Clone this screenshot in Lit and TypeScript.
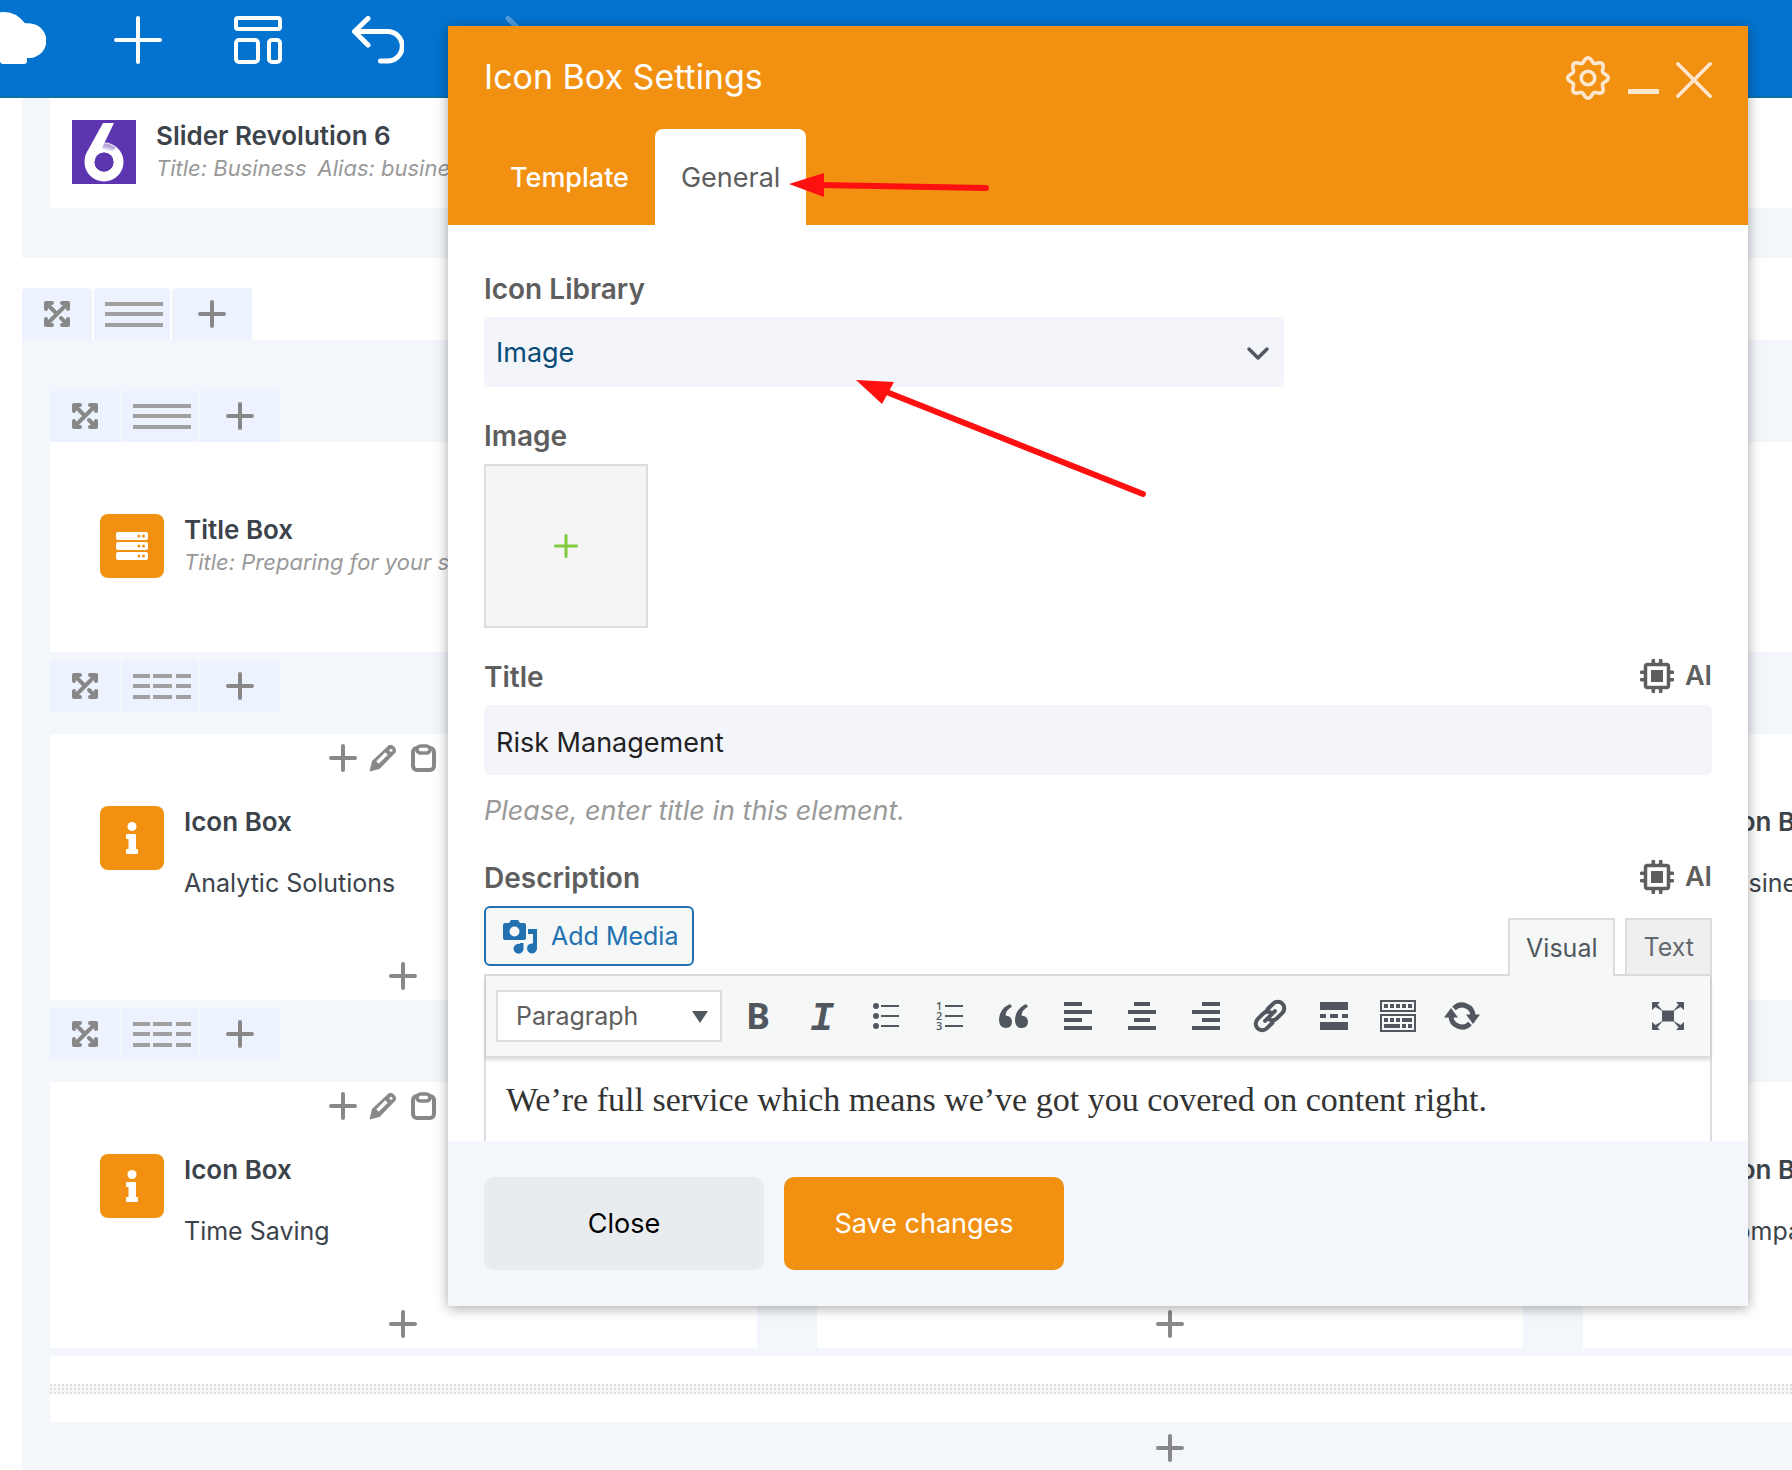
import { LitElement, html, css, svg, nothing } from "lit";
import type { TemplateResult } from "lit";
import { customElement, property } from "lit/decorators.js";

/* ---------- icons ---------- */

const gearPath = (() => {
  const points: string[] = [];
  for (let i = 0; i < 160; i++) {
    const a = (i / 160) * Math.PI * 2;
    const r = 18 + 2.2 * Math.cos(8 * a);
    points.push(`${(22 + r * Math.cos(a)).toFixed(2)} ${(22 + r * Math.sin(a)).toFixed(2)}`);
  }
  return `M${points.join("L")}Z`;
})();

const frame = (w: number, h: number, body: unknown) =>
  html`<svg width=${w} height=${h} viewBox="0 0 ${w} ${h}" fill="none" aria-hidden="true">${body}</svg>`;

const plusIcon = (size: number, stroke: number) => {
  const c = size / 2;
  const e = stroke / 2;
  return frame(size, size, svg`<path d="M${c} ${e}V${size - e}M${e} ${c}H${size - e}" stroke="currentColor"
    stroke-width=${stroke} stroke-linecap="round"/>`);
};

const cloudIcon = () => frame(46, 64, svg`<path fill="currentColor"
  d="M0 12.3Q15 10 25 23.300Q28 23 31 23.500A17.200 17.200 0 0 1 27 58V61Q27 64 24 64H3Q1 64 0 62Z"/>`);

const layoutIcon = () => frame(48, 48, svg`<g stroke="currentColor" stroke-width="4">
  <rect x="2" y="2" width="44" height="11" rx="2"/><rect x="2" y="24" width="22" height="22" rx="3"/>
  <rect x="35" y="24" width="11" height="22" rx="3"/></g>`);

const undoIcon = () => frame(52, 48, svg`<path d="M16 2.500L2.500 15.500L16 29M3 15.500H35.500A14.500 14.500 0 0 1 35.500 45H28.500"
  stroke="currentColor" stroke-width="5" stroke-linecap="round" stroke-linejoin="round"/>`);

const redoIcon = () => frame(52, 48, svg`<path d="M36 2.500L49.500 15.500L36 29M49 15.500H16.500A14.500 14.500 0 0 0 16.500 45H23.500"
  stroke="currentColor" stroke-width="5" stroke-linecap="round" stroke-linejoin="round"/>`);

const moveIcon = () => frame(26, 26, svg`<g stroke="currentColor" stroke-width="4" stroke-linecap="round" stroke-linejoin="round">
  <path d="M2 8V2H8M18 2H24V8M24 18V24H18M8 24H2V18"/><path d="M3 3L11 11M23 3L3 23M17 17L23 23"/></g>`);

const columnsIcon = (split: boolean) => frame(58, 26, svg`<g fill="#a0a0a0">${[0, 10, 21].map((y) =>
  split
    ? svg`<rect y=${y} width="17" height="4"/><rect x="20" y=${y} width="19" height="4"/><rect x="43" y=${y} width="15" height="4"/>`
    : svg`<rect y=${y} width="58" height="4"/>`)}</g>`);

const pencilIcon = () => frame(28, 28, svg`<path d="M0.500 27.500L3 17L19.500 1.500Q22-.5 25 2.500T26.500 8.500L10.500 25Z" fill="currentColor"/>
  <path d="M8.500 18.500L17.500 9.500" stroke="#fff" stroke-width="3.500"/><circle cx="22" cy="6.200" r="1.500" fill="#fff"/>`);

const clipboardIcon = () => frame(26, 28, svg`<rect x="3" y="4" width="21" height="22" rx="4" stroke="currentColor" stroke-width="4"/>
  <rect x="7" y="2" width="13" height="7" rx="3.500" stroke="currentColor" stroke-width="3.500" fill="#fff"/>`);

const gearIcon = () => frame(44, 44, svg`<path d=${gearPath} stroke="currentColor" stroke-width="3.600" stroke-linejoin="round"/>
  <circle cx="22" cy="22" r="6.800" stroke="currentColor" stroke-width="3.600"/>`);

const minimizeIcon = () => frame(32, 44, svg`<rect x="1" y="33" width="31" height="5" fill="currentColor"/>`);

const closeIcon = () => frame(36, 44, svg`<path d="M1.800 7.800L34.200 40.200M34.200 7.800L1.800 40.200" stroke="currentColor"
  stroke-width="3.500" stroke-linecap="round"/>`);

const chevronIcon = () => frame(24, 16, svg`<path d="M3 3L12 12L21 3" stroke="#50575e" stroke-width="3.500"
  stroke-linecap="round" stroke-linejoin="round"/>`);

const caretIcon = () => frame(16, 12, svg`<path d="M0 0H16L8 12Z" fill="#50575e"/>`);

const chipIcon = () => frame(34, 34, svg`<rect x="5.500" y="5.500" width="23" height="23" rx="2" stroke="currentColor" stroke-width="3.500"/>
  <rect x="11" y="11" width="12" height="12" fill="currentColor"/>
  <path d="M13.300 1.500V5M20.700 1.500V5M13.300 29V32.500M20.700 29V32.500M1.500 13.300H5M1.500 20.700H5M29 13.300H32.500M29 20.700H32.500"
    stroke="currentColor" stroke-width="3.600" stroke-linecap="round"/>`);

const mediaIcon = () => frame(36, 36, svg`<path fill="currentColor" fill-rule="evenodd"
  d="M2 5H6L8 2H15L17 5H21Q23 5 23 7V20Q23 22 21 22H2Q0 22 0 20V7Q0 5 2 5ZM11.500 8.500A5 5 0 1 0 11.500 18.500A5 5 0 1 0 11.500 8.500Z"/>
  <path fill="currentColor" d="M25 11H34V30A5 5 0 1 1 30 25.500V16H25Z"/>
  <path fill="currentColor" d="M17 25H20.500V30.500A5 5 0 1 1 17 26Z"/>`);

const logoSix = () => frame(64, 64, svg`<rect width="64" height="64" fill="#5e35b1"/>
  <defs><linearGradient id="shade" x1="0" y1="1" x2="1" y2="0"><stop offset=".3" stop-color="#fff"/>
  <stop offset="1" stop-color="#b9a6dd"/></linearGradient></defs>
  <circle cx="32" cy="42" r="14.500" stroke="#fff" stroke-width="10"/>
  <path d="M28 28.500A14.500 14.500 0 0 1 41 31" stroke="url(#shade)" stroke-width="9"/>
  <path d="M31 3H42L29 30L20 47L13 38Q13.500 35 15 32Z" fill="#fff"/>
  <circle cx="32" cy="42" r="9.500" fill="#5e35b1"/>`);

const serverIcon = () => frame(32, 28, svg`${[0, 10, 20].map((y) => svg`<rect y=${y} width="32" height="8" rx="2" fill="#fff"/>
  <circle cx="23" cy=${y + 4} r="1.500" fill="#f29111"/><circle cx="27.500" cy=${y + 4} r="1.500" fill="#f29111"/>`)}`);

const infoIcon = () => frame(12, 32, svg`<circle cx="6" cy="4.500" r="4.500" fill="#fff"/>
  <path fill="#fff" d="M1 12H9Q10 12 10 13V27H11Q12 27 12 28V31Q12 32 11 32H1Q0 32 0 31V28Q0 27 1 27H2.500V17H1Q0 17 0 16V13Q0 12 1 12Z"/>`);

const bulletListIcon = () => frame(40, 40, svg`<g fill="currentColor">${[10, 20, 30].map((y) =>
  svg`<circle cx="10" cy=${y} r="3"/><rect x="15" y=${y - 1} width="18" height="2"/>`)}</g>`);

const numberListIcon = () => frame(40, 40, svg`<g fill="currentColor">${[10, 20, 30].map((y, i) =>
  svg`<text x="6" y=${y + 4} font-family="Open Sans, sans-serif" font-weight="600" font-size="11">${i + 1}</text>
  <rect x="15" y=${y - 1} width="18" height="2"/>`)}</g>`);

const quoteIcon = () => frame(40, 40, svg`<g fill="currentColor">
  <path d="M16 8Q5 13 5 24.500Q5.500 32 12 32Q18 31.500 18 25.500Q17.500 20 11.500 19.500Q12 14 18 10.500Z"/>
  <path d="M32 8Q21 13 21 24.500Q21.500 32 28 32Q34 31.500 34 25.500Q33.500 20 27.500 19.500Q28 14 34 10.500Z"/></g>`);

const alignIcon = (rows: number[][]) => frame(40, 40, svg`<g fill="currentColor">${rows.map(([x, w], i) =>
  svg`<rect x=${x} y=${6 + i * 8} width=${w} height="4"/>`)}</g>`);

const linkIcon = () => frame(40, 40, svg`<g transform="rotate(-45 20 20)" stroke="currentColor" stroke-width="4" stroke-linecap="round">
  <path d="M17 26.500H9A6.500 6.500 0 0 1 9 13.500H17A6.500 6.500 0 0 1 23 18"/>
  <path d="M23 13.500H31A6.500 6.500 0 0 1 31 26.500H23A6.500 6.500 0 0 1 17 22"/><path d="M13 20H27"/></g>`);

const moreIcon = () => frame(40, 40, svg`<g fill="currentColor"><rect x="6" y="6" width="28" height="8"/><rect x="6" y="26" width="28" height="8"/>
  <rect x="6" y="18" width="6" height="4"/><rect x="16" y="18" width="8" height="4"/><rect x="28" y="18" width="6" height="4"/></g>`);

const keyboardIcon = () => frame(40, 40, svg`<g stroke="currentColor" stroke-width="2"><rect x="3" y="5" width="34" height="10"/>
  <rect x="3" y="19" width="34" height="16"/></g><g fill="currentColor">
  ${[6, 12, 18, 24, 30].map((x) => svg`<rect x=${x} y="8" width="4" height="4"/>`)}
  ${[6, 12, 18].map((x) => svg`<rect x=${x} y="22" width="4" height="4"/>`)}
  <rect x="24" y="22" width="10" height="4"/><rect x="6" y="28" width="16" height="4"/>
  <rect x="24" y="28" width="4" height="4"/><rect x="30" y="28" width="4" height="4"/></g>`);

const refreshIcon = () => frame(40, 40, svg`<g stroke="currentColor" stroke-width="5"><path d="M12 12.500A11 11 0 0 1 31 20"/>
  <path d="M28 27.500A11 11 0 0 1 9 20"/></g><g fill="currentColor"><path d="M2 21.500L9 12L16 21.500Z"/><path d="M24 18.500H38L31 28Z"/></g>`);

const fullscreenIcon = () => frame(40, 40, svg`<g fill="currentColor"><rect x="14" y="14.500" width="12" height="11"/>
  ${[[1, 1], [-1, 1], [1, -1], [-1, -1]].map(([x, y]) => svg`<path transform="translate(20 20) scale(${x} ${y})"
    d="M-16-14H-8L-10.500-11.500L-5-4.500L-12.500-9L-16-6Z"/>`)}</g>`);

/* ---------- canvas pieces ---------- */

@customElement("row-controls")
class RowControls extends LitElement {
  @property({ type: Boolean }) split = false;

  static styles = css`
    :host { display: flex; gap: 2px; height: 52px; color: #888; }
    * { box-sizing: border-box; }
    button {
      display: flex; align-items: center; justify-content: center; height: 52px; padding: 0;
      border: 0; border-radius: 4px 4px 0 0; background: #ecf3fe; color: inherit;
    }
    .move { width: 70px; }
    .columns { width: 76px; padding: 2px 0 0 4px; }
    .add { width: 80px; }
  `;

  render() {
    return html`
      <button class="move" aria-label="Move row">${moveIcon()}</button>
      <button class="columns" aria-label="Row layout">${columnsIcon(this.split)}</button>
      <button class="add" aria-label="Add column">${plusIcon(28, 4)}</button>
    `;
  }
}

@customElement("element-card")
class ElementCard extends LitElement {
  @property() kind: "slider" | "title" | "icon" | "empty" = "empty";
  @property() name = "";
  @property() text = "";
  @property() details: string[] = [];

  static styles = css`
    :host { display: flex; flex-direction: column; background: #fff; color: #3c434a; }
    .tools, .foot { display: flex; align-items: center; justify-content: center; height: 48px; color: #888; }
    .tools button { width: 40px; }
    button { display: flex; align-items: center; justify-content: center; height: 40px; padding: 0; border: 0; background: none; color: inherit; }
    .body { display: flex; gap: 20px; flex: 1; }
    .body.slider { padding: 22px 22px 24px; }
    .body.title { padding: 72px 50px 74px; }
    .body.icon, .body.empty { padding: 24px 50px; min-height: 122px; }
    .badge { display: flex; align-items: center; justify-content: center; flex: none; width: 64px; height: 64px; border-radius: 8px; background: #f29111; }
    .badge.logo { border-radius: 0; background: none; }
    .name { margin: 0; font-size: 26px; line-height: 32px; font-weight: 600; white-space: nowrap; }
    .details { display: flex; gap: 11px; margin: 0; font-size: 22px; line-height: 32px; font-style: italic; color: #999; white-space: nowrap; }
    .text { margin: 29px 0 0; font-size: 25px; line-height: 32px; white-space: nowrap; }
  `;

  render() {
    const framed = this.kind === "icon" || this.kind === "empty";
    const badge: Record<string, () => TemplateResult> = { slider: logoSix, title: serverIcon, icon: infoIcon };
    return html`
      ${framed
        ? html`<div class="tools">
            <button aria-label="Add element">${plusIcon(28, 4)}</button>
            <button aria-label="Edit column">${pencilIcon()}</button>
            <button aria-label="Paste">${clipboardIcon()}</button>
            <button aria-label="More"></button>
          </div>`
        : nothing}
      <div class="body ${this.kind}">
        ${this.kind === "empty"
          ? nothing
          : html`<span class="badge ${this.kind === "slider" ? "logo" : ""}">${badge[this.kind]()}</span>
              <div>
                <h3 class="name">${this.name}</h3>
                ${this.details.length ? html`<p class="details">${this.details.map((d) => html`<span>${d}</span>`)}</p>` : nothing}
                ${this.text ? html`<p class="text">${this.text}</p>` : nothing}
              </div>`}
      </div>
      ${framed ? html`<div class="foot"><button aria-label="Append element">${plusIcon(28, 4)}</button></div>` : nothing}
    `;
  }
}

/* ---------- settings window ---------- */

@customElement("settings-panel")
class SettingsPanel extends LitElement {
  static styles = css`
    :host { display: flex; flex-direction: column; background: #fff; box-shadow: 0 2px 12px rgba(0, 0, 0, 0.35); color: #5e5e5e; font-size: 27px; line-height: 36px; }
    * { box-sizing: border-box; }
    button, input, select { font: inherit; color: inherit; margin: 0; }
    header { display: flex; flex-direction: column; justify-content: space-between; flex: none; height: 199px; padding: 0 36px; background: #f29111; color: #fff; }
    .top { display: flex; justify-content: space-between; padding-top: 30px; }
    h2 { margin: 0; font-size: 34px; line-height: 42px; font-weight: 400; }
    .actions { display: flex; gap: 17px; color: #fde7cf; }
    .actions button { display: flex; padding: 0; border: 0; background: none; height: 44px; }
    nav { display: flex; }
    nav button { height: 96px; padding: 2px 26px 0; border: 0; border-radius: 8px 8px 0 0; background: none; font-weight: 500; }
    nav .active { background: #fff; color: #5e5e5e; font-weight: 400; }
    .body { flex: 1; min-height: 0; overflow: hidden; padding: 46px 36px 0; }
    .head { display: flex; justify-content: space-between; align-items: flex-start; height: 37px; }
    label, .label { display: block; font-size: 28px; font-weight: 600; line-height: 37px; }
    .field { margin-bottom: 31px; }
    .ai { display: flex; align-items: center; gap: 11px; padding: 0; border: 0; background: none; font-weight: 600; line-height: 32px; }
    .pick { display: grid; align-items: center; justify-items: end; }
    .pick select { grid-area: 1 / 1; width: 100%; appearance: none; outline: 0; }
    .pick svg { grid-area: 1 / 1; pointer-events: none; }
    .library { width: 800px; max-width: 100%; margin-top: 9px; }
    .library select { height: 70px; padding: 2px 12px 0; border: 0; border-radius: 6px; background: #f4f5fa; color: #0a4b78; }
    .library svg { margin: 4px 14px 0 0; }
    .upload { display: flex; align-items: center; justify-content: center; width: 164px; height: 164px; margin-top: 9px; padding: 0; border: 2px solid #ddd; background: #f5f5f5; color: #80cb3c; }
    .text { display: block; width: 100%; height: 70px; margin-top: 9px; padding: 4px 12px 0; border: 0; border-radius: 6px; background: #f4f5fa; color: #222; }
    .hint { margin: 18px 0 31px; font-style: italic; color: #999; }
    .bar { display: flex; justify-content: space-between; align-items: flex-start; margin-top: 9px; }
    .media { display: flex; align-items: center; gap: 12px; height: 60px; padding: 0 14px 0 17px; border: 2px solid #2271b1; border-radius: 6px; background: #f6f7f7; color: #2271b1; font-size: 25px; }
    .modes { display: flex; gap: 10px; align-self: flex-end; padding-top: 12px; }
    .modes button { height: 56px; padding: 0 16px; border: 2px solid #dcdcde; border-bottom: 0; background: #efefef; color: #646970; font-size: 25px; }
    .modes .active { height: 58px; margin-bottom: -2px; background: #f6f7f7; color: #50575e; z-index: 1; }
    .editor { border: 2px solid #dcdcde; }
    .tools { display: flex; align-items: center; height: 82px; padding: 0 10px; border-bottom: 2px solid #dcdcde; background: #f6f7f7; box-shadow: 0 2px 4px rgba(0, 0, 0, 0.16); color: #50575e; }
    .format { width: 226px; margin-right: 4px; }
    .format select { height: 52px; padding: 0 18px; border: 2px solid #dcdcde; border-radius: 0; background: #fff; color: #5e5e5e; font-size: 25px; }
    .format svg { margin: 2px 14px 0 0; }
    .tools button { display: flex; align-items: center; justify-content: center; width: 64px; height: 60px; padding: 0; border: 0; background: none; }
    .tools .last { margin-left: auto; }
    .tools .bold { font: 700 36px/40px "Noto Sans", sans-serif; }
    .tools .italic { padding-top: 8px; font: italic 700 40px/40px "Liberation Mono", monospace; }
    .content { margin: 0; padding: 24px 20px 60px; font: 34px/36px Georgia, "Liberation Serif", serif; color: #333; white-space: nowrap; }
    footer { display: flex; gap: 20px; flex: none; padding: 36px; background: #f3f7fc; }
    footer button { width: 280px; height: 93px; border: 0; border-radius: 10px; background: #e8ecee; color: #000; }
    footer .save { background: #f29111; color: #fff; }
  `;

  private ai(target: string) {
    return html`<button class="ai" aria-label="Generate ${target} with AI">${chipIcon()}<span>AI</span></button>`;
  }

  render() {
    return html`
      <header>
        <div class="top">
          <h2>Icon Box Settings</h2>
          <div class="actions">
            <button aria-label="Settings">${gearIcon()}</button>
            <button aria-label="Minimize">${minimizeIcon()}</button>
            <button aria-label="Close window">${closeIcon()}</button>
          </div>
        </div>
        <nav><button>Template</button><button class="active">General</button></nav>
      </header>
      <div class="body">
        <div class="field">
          <label for="library">Icon Library</label>
          <div class="pick library"><select id="library"><option>Image</option></select>${chevronIcon()}</div>
        </div>
        <div class="field">
          <label for="upload">Image</label>
          <button class="upload" id="upload" aria-label="Add image">${plusIcon(24, 3)}</button>
        </div>
        <div class="head"><label for="title">Title</label>${this.ai("title")}</div>
        <input class="text" id="title" type="text" .value=${"Risk Management"} />
        <p class="hint">Please, enter title in this element.</p>
        <div class="head"><span class="label">Description</span>${this.ai("description")}</div>
        <div class="bar">
          <button class="media">${mediaIcon()}<span>Add Media</span></button>
          <div class="modes"><button class="active">Visual</button><button>Text</button></div>
        </div>
        <div class="editor">
          <div class="tools">
            <div class="pick format"><select aria-label="Text format"><option>Paragraph</option></select>${caretIcon()}</div>
            <button class="bold" aria-label="Bold">B</button>
            <button class="italic" aria-label="Italic">I</button>
            <button aria-label="Bulleted list">${bulletListIcon()}</button>
            <button aria-label="Numbered list">${numberListIcon()}</button>
            <button aria-label="Blockquote">${quoteIcon()}</button>
            <button aria-label="Align left">${alignIcon([[6, 18], [6, 28], [6, 18], [6, 28]])}</button>
            <button aria-label="Align center">${alignIcon([[12, 16], [6, 28], [12, 16], [6, 28]])}</button>
            <button aria-label="Align right">${alignIcon([[16, 18], [6, 28], [16, 18], [6, 28]])}</button>
            <button aria-label="Insert link">${linkIcon()}</button>
            <button aria-label="Read more">${moreIcon()}</button>
            <button aria-label="Toolbar toggle">${keyboardIcon()}</button>
            <button aria-label="Refresh">${refreshIcon()}</button>
            <button class="last" aria-label="Fullscreen">${fullscreenIcon()}</button>
          </div>
          <p class="content">We’re full service which means we’ve got you covered on content right.</p>
        </div>
      </div>
      <footer><button>Close</button><button class="save">Save changes</button></footer>
    `;
  }
}

/* ---------- page ---------- */

@customElement("app-root")
class AppRoot extends LitElement {
  static styles = css`
    :host { display: block; position: relative; height: 100vh; overflow: hidden; background: #fff; font-family: Inter, "Liberation Sans", sans-serif; }
    .toolbar { display: flex; height: 96px; border-bottom: 2px solid #0a70ac; background: #0473cf; color: #fff; }
    .toolbar a { width: 78px; color: inherit; }
    .toolbar button { display: flex; justify-content: center; align-items: flex-start; width: 120px; padding: 16px 0 0; border: 0; background: none; color: inherit; }
    .toolbar button:disabled { opacity: 0.3; }
    /* The canvas is wider than the window and runs off its right edge. */
    main { margin: 0 -526px 0 22px; }
    section { padding: 0 28px; background: #f3f7fc; }
    .first { padding-bottom: 50px; margin-bottom: 30px; }
    .first element-card { border-radius: 0 0 4px 4px; }
    .second { padding-top: 50px; }
    .spaced { margin-top: 8px; }
    .columns { display: grid; grid-template-columns: repeat(3, 1fr); gap: 60px; margin-top: 22px; }
    .gap { margin-top: 8px; padding: 28px 0; border-radius: 4px; background: #fff; }
    .dots {
      height: 10px;
      background: linear-gradient(90deg, transparent 50%, #f8f8f8 50%) 0 0 / 4px 4px, linear-gradient(#dedede 50%, #f6f6f6 50%) 0 0 / 4px 4px;
    }
    .append { display: flex; align-items: center; justify-content: center; width: 100%; height: 52px; padding: 0; border: 0; background: none; color: #888; }
    settings-panel { position: absolute; top: 26px; right: 44px; bottom: 164px; left: 448px; }
    .marks { position: absolute; top: 0; left: 0; pointer-events: none; }
  `;

  render() {
    return html`
      <div class="toolbar">
        <a href="#" aria-label="Home">${cloudIcon()}</a>
        <button aria-label="Add element">${plusIcon(48, 4)}</button>
        <button aria-label="Templates">${layoutIcon()}</button>
        <button aria-label="Undo">${undoIcon()}</button>
        <button aria-label="Redo" disabled>${redoIcon()}</button>
      </div>
      <main>
        <section class="first">
          <element-card kind="slider" name="Slider Revolution 6" .details=${["Title: Business", "Alias: business"]}></element-card>
        </section>
        <row-controls></row-controls>
        <section class="second">
          <row-controls></row-controls>
          <element-card kind="title" name="Title Box" .details=${["Title: Preparing for your success"]}></element-card>
          <row-controls class="spaced" split></row-controls>
          <div class="columns">
            <element-card kind="icon" name="Icon Box" text="Analytic Solutions"></element-card>
            <element-card></element-card>
            <element-card kind="icon" name="Icon Box" text="Business"></element-card>
          </div>
          <row-controls class="spaced" split></row-controls>
          <div class="columns">
            <element-card kind="icon" name="Icon Box" text="Time Saving"></element-card>
            <element-card></element-card>
            <element-card kind="icon" name="Icon Box" text="Company"></element-card>
          </div>
          <div class="gap"><div class="dots"></div></div>
          <button class="append" aria-label="Add row">${plusIcon(28, 4)}</button>
        </section>
      </main>
      <settings-panel></settings-panel>
      <svg class="marks" width="1200" height="520" viewBox="0 0 1200 520" aria-hidden="true">
        <g stroke="#ff1010" stroke-width="6" stroke-linecap="round"><path d="M820 185L986 188M884 391L1143 494" /></g>
        <g fill="#ff1010"><path d="M789 184L824 173V197Z" /><path d="M856 380L894 382L882 404Z" /></g>
      </svg>
    `;
  }
}
